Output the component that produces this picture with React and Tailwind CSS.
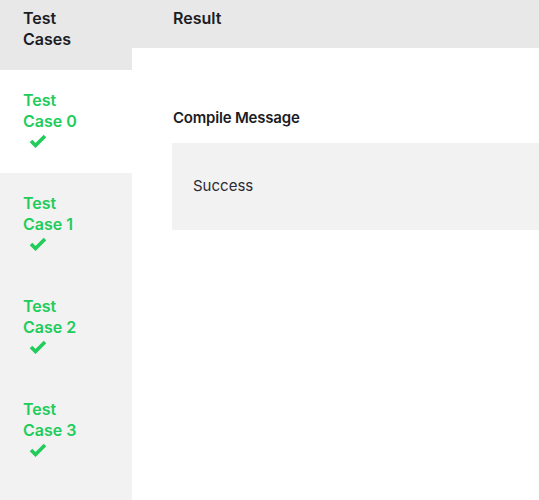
const cases = [0, 1, 2, 3];

function Check() {
  return (
    <svg viewBox="0 0 18 14" className="ml-[6px] mt-[2px] w-[18px] h-[14px]">
      <polyline
        points="2,7 6.5,11.5 16,2"
        fill="none"
        stroke="#21cc5b"
        strokeWidth="3.6"
        strokeLinecap="butt"
        strokeLinejoin="miter"
      />
    </svg>
  );
}

function TestCaseTab({ index, active }) {
  return (
    <div
      className={`h-[103px] pl-[23px] pt-[20px] ${active ? "bg-white" : "bg-[#f2f2f2]"}`}
    >
      <p className="text-[16px] leading-[21px] font-semibold text-[#21cc5b] w-[70px]">
        Test Case {index}
      </p>
      <Check />
    </div>
  );
}

export default function App() {
  return (
    <div className="flex w-[539px] h-[500px] overflow-hidden bg-white font-['Inter',sans-serif] text-[#1c1c24]">
      <div className="w-[132px] shrink-0 bg-[#f2f2f2] flex flex-col">
        <div className="h-[70px] bg-[#e8e8e8] pl-[23px] pt-[8px]">
          <p className="text-[16px] leading-[21px] font-semibold w-[60px]">Test Cases</p>
        </div>
        {cases.map((i) => (
          <TestCaseTab key={i} index={i} active={i === 0} />
        ))}
      </div>
      <div className="flex-1 flex flex-col">
        <div className="h-[48px] bg-[#e8e8e8] pl-[41px] pt-[8px]">
          <p className="text-[16px] leading-[21px] font-semibold">Result</p>
        </div>
        <div className="pl-[40px] pt-[60px]">
          <p className="text-[15px] leading-[20px] font-semibold pl-[1px] tracking-[-0.2px]">Compile Message</p>
          <div className="mt-[15px] h-[87px] bg-[#f2f2f2] pl-[21px] flex items-center">
            <span className="text-[15px] text-[#2a2a33]">Success</span>
          </div>
        </div>
      </div>
    </div>
  );
}
